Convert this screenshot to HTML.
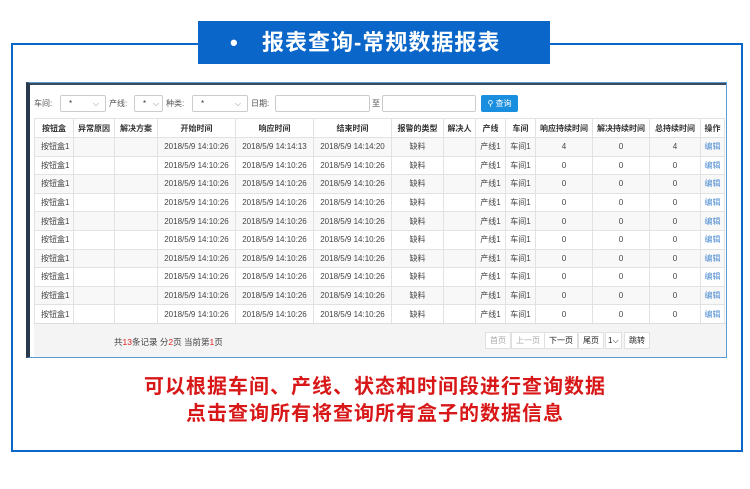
<!DOCTYPE html>
<html><head><meta charset="utf-8"><style>
*{margin:0;padding:0;box-sizing:border-box}
body{width:750px;height:489px;background:#fff;position:relative;overflow:hidden;font-family:"Liberation Sans","Noto Sans CJK SC",sans-serif}
.frame{position:absolute;left:11px;top:43px;width:732px;height:409px;border:2px solid #0a66c8}
.title{position:absolute;left:198px;top:21px;width:352px;height:43px;background:#0a66c8;color:#fff;font-size:22px;font-weight:bold;line-height:43px;letter-spacing:1px}
.title .dot{position:absolute;left:32px;top:0}
.title .t{position:absolute;left:64px;top:0}
.shot{position:absolute;left:26px;top:82px;width:701px;height:276px;border:1px solid #5b9bd5;border-left:4px solid #2a3a4e;background:#fff;overflow:hidden}
.topbar{position:absolute;left:0;top:0;width:100%;height:2px;background:#3a4a5a}
.tb{position:absolute;top:12px;font-size:8px;color:#555;height:17px;line-height:17px}
.box{position:absolute;top:12px;height:17px;border:1px solid #ccc;border-radius:2px;background:#fff;font-size:8px;line-height:15px;color:#333;padding-left:8px}
.box i{position:absolute;right:6px;top:0;font-style:normal;color:#888}
.btn{position:absolute;left:451px;top:12px;width:37px;height:17px;background:#1a8fe0;border-radius:2px;color:#fff;font-size:8px;line-height:17px;text-align:center}
table{position:absolute;left:4px;top:35px;border-collapse:collapse;font-size:8px;color:#444;table-layout:fixed}
td,th{border:1px solid #e2e2e2;height:18.6px;text-align:center;white-space:nowrap;overflow:hidden;padding:0}
th{font-weight:bold;color:#333;height:19px;background:#fff}
tr:nth-child(even) td{background:#f8f8f8}
td.l{text-align:left;padding-left:6px}
td.e{color:#4a8ad0}
.pg{position:absolute;left:4px;top:240px;width:700px;height:36px;background:#f4f4f4;border-top:1px solid #ddd}
.pg .info{position:absolute;left:80px;top:12px;font-size:8.5px;color:#444}
.pg .info b{color:#e02020;font-weight:normal}
.pb{position:absolute;top:8px;height:17px;line-height:15px;font-size:8px;border:1px solid #e0e0e0;background:#fff;padding:0 4px;color:#222}
.red{position:absolute;left:0;width:750px;text-align:center;color:#d81818;font-size:20px;font-weight:bold;letter-spacing:1px}
</style></head><body>
<div class="frame"></div>
<div class="title"><span class="dot">•</span><span class="t">报表查询-常规数据报表</span></div>
<div class="shot">
<div class="topbar"></div>
<span class="tb" style="left:4px">车间:</span>
<div class="box" style="left:30px;width:46px">*<i>⌵</i></div>
<span class="tb" style="left:79px">产线:</span>
<div class="box" style="left:104px;width:29px">*<i style="right:3px">⌵</i></div>
<span class="tb" style="left:136px">种类:</span>
<div class="box" style="left:162px;width:56px">*<i>⌵</i></div>
<span class="tb" style="left:221px">日期:</span>
<div class="box" style="left:245px;width:95px"></div>
<span class="tb" style="left:342px">至</span>
<div class="box" style="left:352px;width:94px"></div>
<div class="btn">⚲ 查询</div>
<table>
<colgroup><col style="width:39px"><col style="width:41px"><col style="width:43px"><col style="width:78px"><col style="width:78px"><col style="width:78px"><col style="width:52px"><col style="width:32px"><col style="width:30px"><col style="width:30px"><col style="width:57px"><col style="width:57px"><col style="width:51px"><col style="width:24px"></colgroup>
<tr><th>按钮盒</th><th>异常原因</th><th>解决方案</th><th>开始时间</th><th>响应时间</th><th>结束时间</th><th>报警的类型</th><th>解决人</th><th>产线</th><th>车间</th><th>响应持续时间</th><th>解决持续时间</th><th>总持续时间</th><th>操作</th></tr>
<tr><td class="l">按钮盒1</td><td></td><td></td><td>2018/5/9 14:10:26</td><td>2018/5/9 14:14:13</td><td>2018/5/9 14:14:20</td><td>缺料</td><td></td><td>产线1</td><td>车间1</td><td>4</td><td>0</td><td>4</td><td class="e">编辑</td></tr>
<tr><td class="l">按钮盒1</td><td></td><td></td><td>2018/5/9 14:10:26</td><td>2018/5/9 14:10:26</td><td>2018/5/9 14:10:26</td><td>缺料</td><td></td><td>产线1</td><td>车间1</td><td>0</td><td>0</td><td>0</td><td class="e">编辑</td></tr>
<tr><td class="l">按钮盒1</td><td></td><td></td><td>2018/5/9 14:10:26</td><td>2018/5/9 14:10:26</td><td>2018/5/9 14:10:26</td><td>缺料</td><td></td><td>产线1</td><td>车间1</td><td>0</td><td>0</td><td>0</td><td class="e">编辑</td></tr>
<tr><td class="l">按钮盒1</td><td></td><td></td><td>2018/5/9 14:10:26</td><td>2018/5/9 14:10:26</td><td>2018/5/9 14:10:26</td><td>缺料</td><td></td><td>产线1</td><td>车间1</td><td>0</td><td>0</td><td>0</td><td class="e">编辑</td></tr>
<tr><td class="l">按钮盒1</td><td></td><td></td><td>2018/5/9 14:10:26</td><td>2018/5/9 14:10:26</td><td>2018/5/9 14:10:26</td><td>缺料</td><td></td><td>产线1</td><td>车间1</td><td>0</td><td>0</td><td>0</td><td class="e">编辑</td></tr>
<tr><td class="l">按钮盒1</td><td></td><td></td><td>2018/5/9 14:10:26</td><td>2018/5/9 14:10:26</td><td>2018/5/9 14:10:26</td><td>缺料</td><td></td><td>产线1</td><td>车间1</td><td>0</td><td>0</td><td>0</td><td class="e">编辑</td></tr>
<tr><td class="l">按钮盒1</td><td></td><td></td><td>2018/5/9 14:10:26</td><td>2018/5/9 14:10:26</td><td>2018/5/9 14:10:26</td><td>缺料</td><td></td><td>产线1</td><td>车间1</td><td>0</td><td>0</td><td>0</td><td class="e">编辑</td></tr>
<tr><td class="l">按钮盒1</td><td></td><td></td><td>2018/5/9 14:10:26</td><td>2018/5/9 14:10:26</td><td>2018/5/9 14:10:26</td><td>缺料</td><td></td><td>产线1</td><td>车间1</td><td>0</td><td>0</td><td>0</td><td class="e">编辑</td></tr>
<tr><td class="l">按钮盒1</td><td></td><td></td><td>2018/5/9 14:10:26</td><td>2018/5/9 14:10:26</td><td>2018/5/9 14:10:26</td><td>缺料</td><td></td><td>产线1</td><td>车间1</td><td>0</td><td>0</td><td>0</td><td class="e">编辑</td></tr>
<tr><td class="l">按钮盒1</td><td></td><td></td><td>2018/5/9 14:10:26</td><td>2018/5/9 14:10:26</td><td>2018/5/9 14:10:26</td><td>缺料</td><td></td><td>产线1</td><td>车间1</td><td>0</td><td>0</td><td>0</td><td class="e">编辑</td></tr>
</table>
<div class="pg">
<div class="info">共<b>13</b>条记录 分<b>2</b>页 当前第<b>1</b>页</div>
<span class="pb" style="left:451px;color:#aaa">首页</span>
<span class="pb" style="left:477px;color:#aaa">上一页</span>
<span class="pb" style="left:510px">下一页</span>
<span class="pb" style="left:544px">尾页</span>
<span class="pb" style="left:571px;padding:0 2px">1⌵</span>
<span class="pb" style="left:590px">跳转</span>
</div>
</div>
<div class="red" style="top:370px">可以根据车间、产线、状态和时间段进行查询数据</div>
<div class="red" style="top:397px">点击查询所有将查询所有盒子的数据信息</div>
</body></html>
